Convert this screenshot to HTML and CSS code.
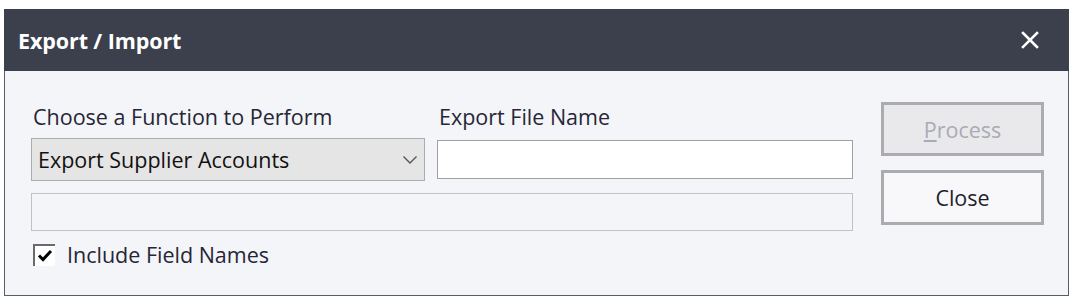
FILE: index.html
```html
<!DOCTYPE html>
<html lang="en">
<head>
  <meta charset="UTF-8">
  <title>Export / Import</title>
  <link rel="stylesheet" href="styles.css">
</head>
<body>
  <div class="dialog">
    <div class="titlebar">
      <span class="title">Export / Import</span>
      <button class="close-x" title="Close">
        <svg width="18" height="18" viewBox="0 0 18 18">
          <path d="M2 2 L16 16 M16 2 L2 16" stroke="#fff" stroke-width="2.6" stroke-linecap="square"/>
        </svg>
      </button>
    </div>

    <div class="content">
      <div class="form-area">
        <div class="fields">
          <div class="field">
            <label class="field-label">Choose a Function to Perform</label>
            <div class="select">
              <span>Export Supplier Accounts</span>
              <svg width="16" height="10" viewBox="0 0 16 10">
                <path d="M1.5 1.5 L8 8 L14.5 1.5" fill="none" stroke="#555" stroke-width="1.4"/>
              </svg>
            </div>
          </div>
          <div class="field">
            <label class="field-label">Export File Name</label>
            <input type="text" class="text-input">
          </div>
        </div>
        <div class="status-bar"></div>
        <label class="check-row">
          <span class="checkbox">
            <svg width="16" height="14" viewBox="0 0 16 14">
              <path d="M2 6.5 L6 10.5 L14 2" fill="none" stroke="#000" stroke-width="3"/>
            </svg>
          </span>
          Include Field Names
        </label>
      </div>

      <div class="buttons">
        <button class="btn disabled"><u>P</u>rocess</button>
        <button class="btn">Close</button>
      </div>
    </div>
  </div>
</body>
</html>
```

FILE: styles.css
```css
body {
  margin: 0;
  padding: 9px 0 0 4px;
  background: #fff;
  font-family: 'Open Sans', 'Noto Sans', sans-serif;
  color: #262636;
}
.dialog {
  width: 1065px;
  background: #f4f5f9;
  border: 1px solid #5a5d66;
  border-top: none;
  box-sizing: border-box;
  height: 287px;
}
.titlebar {
  height: 62px;
  margin: 0 -1px;
  background: #3b404c;
  display: flex;
  align-items: center;
  justify-content: space-between;
  padding: 0 30px 0 14px;
}
.title {
  color: #fff;
  font-weight: bold;
  font-size: 21.5px;
  letter-spacing: -0.1px;
}
.close-x {
  background: none;
  border: none;
  padding: 0;
  width: 18px;
  height: 18px;
  display: flex;
}
.content {
  display: flex;
  padding: 30px 24px 0 26px;
}
.form-area {
  width: 822px;
}
.fields {
  display: flex;
  gap: 12px;
}
.field {
  display: flex;
  flex-direction: column;
}
.field:first-child {
  width: 394px;
}
.field:last-child {
  flex: 1;
}
.field-label {
  font-size: 21.5px;
  line-height: 28px;
  padding: 2px 0 0 2px;
  height: 37px;
  box-sizing: border-box;
}
.select {
  height: 43px;
  box-sizing: border-box;
  background: #e5e5e5;
  border: 1px solid #adadad;
  display: flex;
  align-items: center;
  justify-content: space-between;
  padding: 0 6px 0 6px;
  font-size: 21.5px;
  color: #111;
}
.text-input {
  margin-top: 2px;
  height: 39px;
  box-sizing: border-box;
  border: 1px solid #a0a0a0;
  background: #fff;
}
.status-bar {
  margin-top: 12px;
  height: 38px;
  box-sizing: border-box;
  border: 1px solid #c2c2c4;
}
.check-row {
  display: flex;
  align-items: center;
  gap: 12px;
  margin-top: 13px;
  padding-left: 2px;
  font-size: 21.5px;
  line-height: 22px;
  color: #262636;
}
.checkbox {
  width: 22px;
  height: 22px;
  box-sizing: border-box;
  background: #fff;
  border-left: 2px solid #6a6a6a;
  border-top: 2px solid #6a6a6a;
  display: flex;
  align-items: center;
  justify-content: center;
}
.buttons {
  margin-left: 28px;
  display: flex;
  flex-direction: column;
  gap: 14px;
  padding-top: 1px;
}
.btn {
  width: 163px;
  height: 55px;
  box-sizing: border-box;
  border: 3px solid #ababb0;
  background: #f8f8fa;
  font-family: inherit;
  font-size: 21.5px;
  color: #1f1f2c;
}
.btn.disabled {
  background: #e9e9ec;
  color: #a9abb5;
  height: 54px;
}
```
